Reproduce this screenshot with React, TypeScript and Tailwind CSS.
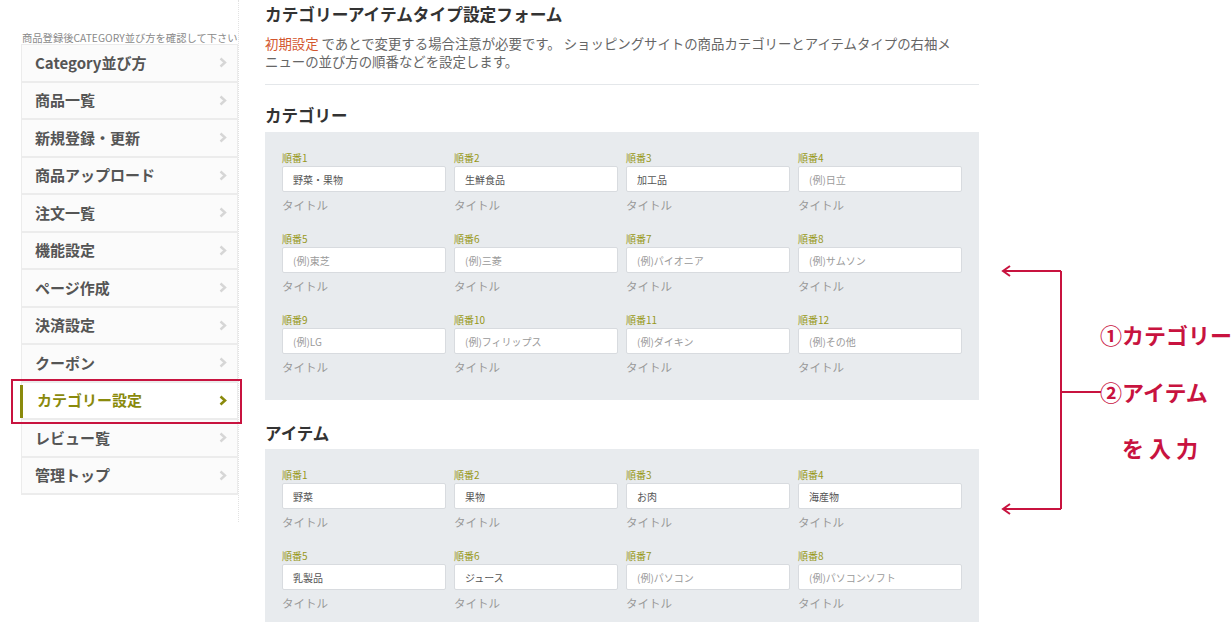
import React from "react";

const menu = [
  "Category並び方",
  "商品一覧",
  "新規登録・更新",
  "商品アップロード",
  "注文一覧",
  "機能設定",
  "ページ作成",
  "決済設定",
  "クーポン",
  "カテゴリー設定",
  "レビュー覧",
  "管理トップ",
];

type Field = { v?: string; p?: string };

const categories: Field[] = [
  { v: "野菜・果物" },
  { v: "生鮮食品" },
  { v: "加工品" },
  { p: "(例)日立" },
  { p: "(例)東芝" },
  { p: "(例)三菱" },
  { p: "(例)パイオニア" },
  { p: "(例)サムソン" },
  { p: "(例)LG" },
  { p: "(例)フィリップス" },
  { p: "(例)ダイキン" },
  { p: "(例)その他" },
];

const items: Field[] = [
  { v: "野菜" },
  { v: "果物" },
  { v: "お肉" },
  { v: "海産物" },
  { v: "乳製品" },
  { v: "ジュース" },
  { p: "(例)パソコン" },
  { p: "(例)パソコンソフト" },
];

function Chevron({ active }: { active?: boolean }) {
  return (
    <svg width="8" height="11" viewBox="0 0 8 11" className="shrink-0">
      <polyline
        points="1.5,1.5 6,5.5 1.5,9.5"
        fill="none"
        stroke={active ? "#8a8a0c" : "#d6d6d6"}
        strokeWidth={active ? 2.6 : 2.4}
      />
    </svg>
  );
}

function Panel({ data }: { data: Field[] }) {
  return (
    <div className="bg-[#e8ebee] px-[17px] pt-[20px] pb-[25px] grid grid-cols-4 gap-x-[8px] gap-y-[20px]">
      {data.map((f, i) => (
        <div key={i} className="flex flex-col">
          <div className="text-[10px] leading-[12px] text-[#979718] h-[12px]">順番{i + 1}</div>
          <input
            readOnly
            value={f.v ?? ""}
            placeholder={f.p}
            className="mt-[2px] h-[26px] w-full bg-white border border-[#d8dbdf] rounded-[2px] px-[10px] text-[10px] text-[#555] placeholder:text-[#9a9a9a] outline-none"
          />
          <div className="mt-[5px] text-[11.5px] leading-[16px] text-[#999]">タイトル</div>
        </div>
      ))}
    </div>
  );
}

export default function App() {
  return (
    <div className="relative w-[1231px] h-[622px] overflow-hidden bg-white font-['Noto_Sans_CJK_JP','Noto_Sans',sans-serif]">
      <div className="flex">
        {/* Sidebar */}
        <aside className="w-[239px] h-[522px] border-r border-dotted border-[#e2e2e2] pl-[21px] pt-[32px] shrink-0">
          <div className="text-[10.3px] leading-[12px] text-[#8a8a8a] pl-[1px] whitespace-nowrap">
            商品登録後CATEGORY並び方を確認して下さい
          </div>
          <ul className="border border-b-0 border-[#ececec] bg-[#fbfbfb]">
            {menu.map((m) => {
              const active = m === "カテゴリー設定";
              return (
                <li
                  key={m}
                  className={`relative h-[37.5px] flex items-center justify-between border-b-2 border-[#ececec] pr-[10px] ${
                    active ? "bg-white pl-[15px]" : "pl-[13px]"
                  }`}
                >
                  {active && (
                    <>
                      <span className="absolute left-[-2px] top-[2px] bottom-[0px] w-[3px] bg-[#8a8a0c]" />
                      <span className="absolute left-[-11px] right-[-5px] top-[-4px] bottom-[-6px] border-2 border-[#c8133f]" />
                    </>
                  )}
                  <span
                    className={`text-[15px] font-bold whitespace-nowrap ${
                      active ? "text-[#8a8a0c]" : "text-[#555]"
                    }`}
                  >
                    {m}
                  </span>
                  <Chevron active={active} />
                </li>
              );
            })}
          </ul>
        </aside>

        {/* Main */}
        <main className="pl-[26px] pt-[3px] w-[740px] shrink-0">
          <h1 className="text-[16.7px] leading-[22px] font-bold text-[#333] whitespace-nowrap">
            カテゴリーアイテムタイプ設定フォーム
          </h1>
          <p className="mt-[9px] text-[13.4px] leading-[18px] text-[#666] whitespace-nowrap">
            <span className="text-[#d3572f]">初期設定</span> であとで変更する場合注意が必要です。 ショッピングサイトの商品カテゴリーとアイテムタイプの右袖メ
            <br />
            ニューの並び方の順番などを設定します。
          </p>
          <div className="w-[714px] mt-[14px] border-t border-[#e4e7ea]" />

          <section className="w-[714px]">
            <h2 className="mt-[19px] mb-[6px] text-[16.5px] leading-[22px] font-bold text-[#333]">カテゴリー</h2>
            <Panel data={categories} />
            <h2 className="mt-[22px] mb-[5px] text-[16.5px] leading-[22px] font-bold text-[#333]">アイテム</h2>
            <Panel data={items} />
          </section>
        </main>
      </div>

      {/* Annotation overlay */}
      <svg
        className="absolute left-[1000px] top-[262px]"
        width="105"
        height="256"
        viewBox="0 0 105 256"
      >
        <g stroke="#c8133f" strokeWidth="2" fill="none">
          <polyline points="61,9 61,247" />
          <polyline points="3,9 61,9" />
          <polyline points="3,247 61,247" />
          <polyline points="61,130 101,130" />
          <polyline points="10,4 3,9 10,14" />
          <polyline points="10,242 3,247 10,252" />
        </g>
      </svg>
      <div className="absolute left-[1100px] top-[320px] text-[#c8133f] font-bold text-[22px] leading-[28px] whitespace-nowrap">
        <div>①カテゴリー</div>
        <div className="mt-[29px]">②アイテム</div>
        <div className="mt-[28px] pl-[22px] tracking-[5px]">を入力</div>
      </div>
    </div>
  );
}
